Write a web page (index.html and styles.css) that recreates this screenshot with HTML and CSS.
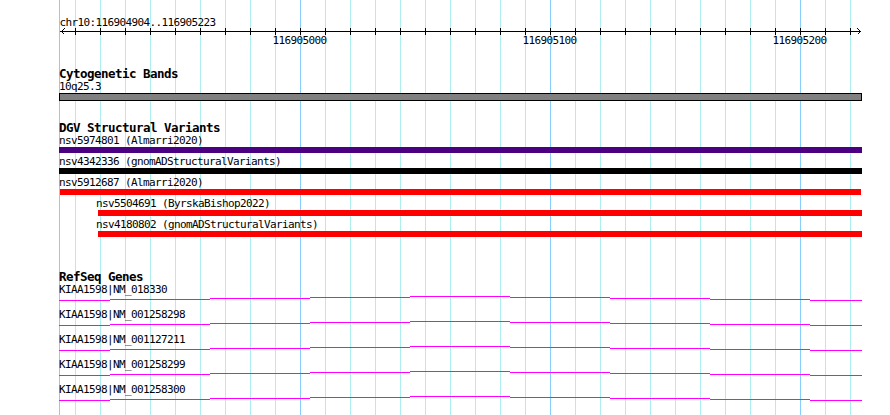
FILE: index.html
```html
<!DOCTYPE html>
<html lang="en">
<head>
    <meta charset="UTF-8">
    <meta name="viewport" content="width=device-width, initial-scale=1.0">
    <title>chr10:116904904..116905223</title>
    <link rel="stylesheet" href="styles.css">
</head>
<body>

    <div class="browser">

        <!-- Ruler -->
        <svg class="ruler" width="890" height="48" viewBox="0 0 890 48">
            <text class="ruler-title" x="59.5" y="26">chr10:116904904..116905223</text>
            <line class="axis" x1="60" y1="31.5" x2="861" y2="31.5"/>
            <polyline class="axis" points="64.5,28.5 61.5,31.5 64.5,34.5"/>
            <polyline class="axis" points="857.5,28.5 860.5,31.5 857.5,34.5"/>
            <path class="axis" d="M75.5 28V35M100.5 28V35M125.5 28V35M150.5 28V35M175.5 28V35M200.5 28V35M225.5 28V35M250.5 28V35M275.5 28V35M300.5 28V35M325.5 28V35M350.5 28V35M375.5 28V35M400.5 28V35M425.5 28V35M450.5 28V35M475.5 28V35M500.5 28V35M525.5 28V35M550.5 28V35M575.5 28V35M600.5 28V35M625.5 28V35M650.5 28V35M675.5 28V35M700.5 28V35M725.5 28V35M750.5 28V35M775.5 28V35M800.5 28V35M825.5 28V35M850.5 28V35"/>
            <text class="tick-label" x="299.5" y="44">116905000</text>
            <text class="tick-label" x="549.5" y="44">116905100</text>
            <text class="tick-label" x="799.5" y="44">116905200</text>
        </svg>

        <div class="tracks">

            <!-- Cytogenetic Bands -->
            <div class="track track-cyto">
                <div class="track-title">Cytogenetic Bands</div>
                <div class="label">10q25.3</div>
                <div class="band"></div>
            </div>

            <!-- DGV Structural Variants -->
            <div class="track track-dgv">
                <div class="track-title">DGV Structural Variants</div>
                <div class="sv-row">
                    <div class="label">nsv5974801 (Almarri2020)</div>
                    <div class="bar bar-purple" style="margin-left: 0px; width: 803px;"></div>
                </div>
                <div class="sv-row">
                    <div class="label">nsv4342336 (gnomADStructuralVariants)</div>
                    <div class="bar bar-black" style="margin-left: 0px; width: 803px;"></div>
                </div>
                <div class="sv-row">
                    <div class="label">nsv5912687 (Almarri2020)</div>
                    <div class="bar bar-red" style="margin-left: 1px; width: 801px;"></div>
                </div>
                <div class="sv-row">
                    <div class="label" style="margin-left: 37px;">nsv5504691 (ByrskaBishop2022)</div>
                    <div class="bar bar-red" style="margin-left: 39px; width: 764px;"></div>
                </div>
                <div class="sv-row">
                    <div class="label" style="margin-left: 37px;">nsv4180802 (gnomADStructuralVariants)</div>
                    <div class="bar bar-red" style="margin-left: 39px; width: 764px;"></div>
                </div>
            </div>

            <!-- RefSeq Genes -->
            <div class="track track-genes">
                <div class="track-title">RefSeq Genes</div>
                <div class="gene-row">
                    <div class="label">KIAA1598|NM_018330</div>
                    <svg class="intron" width="803" height="5" viewBox="0 0 803 5"><path d="M0 4.5H51M51 3.5H151M151 2.5H251M251 1.5H351M351 0.5H451M451 1.5H551M551 2.5H651M651 3.5H751M751 4.5H803"/></svg>
                </div>
                <div class="gene-row">
                    <div class="label">KIAA1598|NM_001258298</div>
                    <svg class="intron" width="803" height="5" viewBox="0 0 803 5"><path d="M0 4.5H51M51 3.5H151M151 2.5H251M251 1.5H351M351 0.5H451M451 1.5H551M551 2.5H651M651 3.5H751M751 4.5H803"/></svg>
                </div>
                <div class="gene-row">
                    <div class="label">KIAA1598|NM_001127211</div>
                    <svg class="intron" width="803" height="5" viewBox="0 0 803 5"><path d="M0 4.5H51M51 3.5H151M151 2.5H251M251 1.5H351M351 0.5H451M451 1.5H551M551 2.5H651M651 3.5H751M751 4.5H803"/></svg>
                </div>
                <div class="gene-row">
                    <div class="label">KIAA1598|NM_001258299</div>
                    <svg class="intron" width="803" height="5" viewBox="0 0 803 5"><path d="M0 4.5H51M51 3.5H151M151 2.5H251M251 1.5H351M351 0.5H451M451 1.5H551M551 2.5H651M651 3.5H751M751 4.5H803"/></svg>
                </div>
                <div class="gene-row">
                    <div class="label">KIAA1598|NM_001258300</div>
                    <svg class="intron" width="803" height="5" viewBox="0 0 803 5"><path d="M0 4.5H51M51 3.5H151M151 2.5H251M251 1.5H351M351 0.5H451M451 1.5H551M551 2.5H651M651 3.5H751M751 4.5H803"/></svg>
                </div>
            </div>

        </div>
    </div>

</body>
</html>
```

FILE: styles.css
```css
/* Page */
body {
    margin: 0;
    background: #fff;
    font-family: "DejaVu Sans Mono", monospace;
    color: #000;
}

/* Panel with the grid behind the tracks */
.browser {
    width: 890px;
    height: 415px;
    overflow: hidden;
    background-color: #fff;
    background-image:
        linear-gradient(#87cefa, #87cefa),
        repeating-linear-gradient(to right, #87cefa 0 1px, transparent 1px 250px),
        repeating-linear-gradient(to right, #aeeeee 0 1px, transparent 1px 25px);
    background-position: 59px 0, 300px 0, 75px 0;
    background-size: 1px 100%, 501px 100%, 776px 100%;
    background-repeat: no-repeat;
}

/* Ruler */
.ruler {
    display: block;
    shape-rendering: crispEdges;
}

.ruler text {
    font-family: "DejaVu Sans Mono", monospace;
    font-size: 11px;
    letter-spacing: -0.62px;
    fill: #000;
}

.ruler .tick-label {
    text-anchor: middle;
}

.axis {
    fill: none;
    stroke: #000;
    stroke-width: 1;
}

/* Tracks */
.tracks {
    padding-left: 59px;
}

.track-title {
    font-weight: bold;
    font-size: 12.5px;
    letter-spacing: -0.53px;
    line-height: 14px;
    white-space: nowrap;
}

.label {
    font-size: 11px;
    letter-spacing: -0.62px;
    line-height: 12px;
    white-space: nowrap;
}

.track-cyto {
    margin-top: 19px;
}

.track-dgv {
    margin-top: 20px;
}

.track-genes {
    margin-top: 33px;
}

/* Cytoband */
.band {
    width: 803px;
    height: 8px;
    box-sizing: border-box;
    border: 1px solid #000;
    background: #808080;
}

/* Structural variant rows */
.sv-row {
    margin-bottom: 3px;
}

.bar {
    height: 6px;
}

.bar-purple {
    background: #4b0082;
}

.bar-black {
    background: #000;
}

.bar-red {
    background: #ff0000;
}

/* Gene rows */
.gene-row {
    margin-bottom: 8px;
}

.intron {
    display: block;
    shape-rendering: crispEdges;
}

.intron path {
    fill: none;
    stroke: #ff00ff;
    stroke-width: 1;
}
```
